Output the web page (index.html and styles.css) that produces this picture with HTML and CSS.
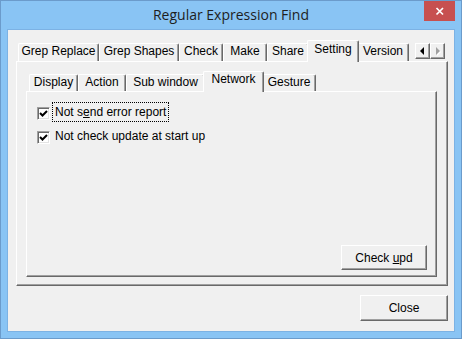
FILE: index.html
```html
<!DOCTYPE html>
<html>
<head>
<meta charset="utf-8">
<title>Regular Expression Find</title>
<link rel="stylesheet" href="styles.css">
</head>
<body>
<div class="window">
  <div class="titlebar">
    <span class="title">Regular Expression Find</span>
    <div class="close-btn">
      <svg width="31" height="20" viewBox="0 0 31 20"><path d="M12.5 7 L19 13.5 M19 7 L12.5 13.5" stroke="#fff" stroke-width="1.7" fill="none"/></svg>
    </div>
  </div>
  <div class="client">
    <div class="tabctl">
      <div class="tabrow outer-row">
        <div class="tab w-gr">Grep Replace</div>
        <div class="tab w-gs">Grep Shapes</div>
        <div class="tab w-check">Check</div>
        <div class="tab w-make">Make</div>
        <div class="tab w-share">Share</div>
        <div class="tab selected w-setting">Setting</div>
        <div class="tab w-version">Version</div>
        <div class="spin">
          <div class="spin-btn"><svg width="13" height="14" viewBox="0 0 13 14"><polygon points="4,7 8,3 8,11" fill="#000"/></svg></div>
          <div class="spin-btn"><svg width="13" height="14" viewBox="0 0 13 14"><polygon points="6,4 10,8 6,12" fill="#fff"/><polygon points="5,3 9,7 5,11" fill="#a0a0a0"/></svg></div>
        </div>
      </div>
      <div class="panel outer-panel">
        <div class="tabctl">
          <div class="tabrow inner-row">
            <div class="tab w-display">Display</div>
            <div class="tab w-action">Action</div>
            <div class="tab w-sub">Sub window</div>
            <div class="tab selected w-network">Network</div>
            <div class="tab w-gesture">Gesture</div>
          </div>
          <div class="panel inner-panel">
            <div class="check-row">
              <span class="box"><svg width="9" height="9" viewBox="0 0 9 9"><path d="M1 4 L3.5 6.5 L8 2" stroke="#000" stroke-width="2" fill="none"/></svg></span>
              <span class="label focused">Not s<u>e</u>nd error report</span>
            </div>
            <div class="check-row second">
              <span class="box"><svg width="9" height="9" viewBox="0 0 9 9"><path d="M1 4 L3.5 6.5 L8 2" stroke="#000" stroke-width="2" fill="none"/></svg></span>
              <span class="label">Not check update at start up</span>
            </div>
            <div class="btn-row">
              <button class="btn btn-check">Check <u>u</u>pd</button>
            </div>
          </div>
        </div>
      </div>
    </div>
    <div class="footer">
      <button class="btn btn-close">Close</button>
    </div>
  </div>
</div>
</body>
</html>
```

FILE: styles.css
```css
* { box-sizing: border-box; }
html, body { margin: 0; padding: 0; }
body {
  width: 462px;
  height: 339px;
  overflow: hidden;
  font-family: "Liberation Sans", Arial, sans-serif;
  font-size: 12px;
  color: #000;
  background: #89c4f4;
}
.window {
  width: 462px;
  height: 339px;
  background: #89c4f4;
  border: 1px solid #6b9bcb;
  padding: 0 6px 6px 6px;
  display: flex;
  flex-direction: column;
}
.titlebar {
  height: 28px;
  flex: none;
  display: grid;
  grid-template-columns: 1fr auto 1fr;
}
.title {
  grid-column: 2;
  font-family: "Open Sans", "Noto Sans", sans-serif;
  font-size: 14px;
  line-height: 19px;
  padding-top: 4px;
  color: #1e1e1e;
  white-space: nowrap;
}
.close-btn {
  grid-column: 3;
  justify-self: end;
  align-self: start;
  width: 31px;
  height: 20px;
  background: #c75050;
  display: flex;
}
.client {
  flex: 1;
  background: #f0f0f0;
  border: 1px solid #7cb2e4;
  padding: 10px 6px 10px 8px;
  display: flex;
  flex-direction: column;
}
.tabctl {
  display: flex;
  flex-direction: column;
}
.tabrow {
  display: flex;
  align-items: flex-end;
  position: relative;
  z-index: 1;
  flex: none;
}
.outer-row { height: 21px; padding-left: 2px; }
.inner-row { height: 20px; padding-left: 3px; }
.tab {
  flex: none;
  border-top: 1px solid #fff;
  border-left: 1px solid #fff;
  border-right: 1px solid #696969;
  box-shadow: inset -1px 0 #a0a0a0;
  border-radius: 2px 2px 0 0;
  line-height: 14px;
  text-align: center;
  white-space: nowrap;
  background: #f0f0f0;
}
.outer-row .tab { height: 18px; }
.inner-row .tab { height: 17px; }
.tab.selected {
  margin: 0 -2px -1px -2px;
  position: relative;
  z-index: 2;
}
.outer-row .tab.selected { height: 22px; padding-top: 1px; }
.inner-row .tab.selected { height: 21px; }
.w-gr { width: 81px; }
.w-gs { width: 80px; }
.w-check { width: 44px; }
.w-make { width: 44px; }
.w-share { width: 42px; }
.w-setting { width: 52px; }
.w-version { width: 52px; }
.w-display { width: 49px; }
.w-action { width: 48px; }
.w-sub { width: 79px; }
.w-network { width: 61px; }
.w-gesture { width: 54px; }
.spin {
  margin-left: auto;
  margin-right: 3px;
  align-self: flex-start;
  margin-top: 3px;
  display: flex;
}
.spin-btn {
  width: 15px;
  height: 16px;
  background: #f0f0f0;
  border: 1px solid;
  border-color: #fff #696969 #696969 #fff;
  box-shadow: inset -1px -1px #a0a0a0;
}
.spin-btn svg { display: block; }
.panel {
  border: 1px solid;
  border-color: #fff #696969 #696969 #fff;
  box-shadow: inset -1px -1px #a0a0a0;
  background: #f0f0f0;
}
.outer-panel {
  height: 225px;
  padding: 9px 10px 8px 9px;
}
.inner-panel {
  height: 186px;
  padding: 10px 9px 6px 10px;
  display: flex;
  flex-direction: column;
}
.check-row {
  display: flex;
  align-items: flex-start;
  height: 20px;
}
.check-row.second { margin-top: 4px; }
.box {
  width: 13px;
  height: 13px;
  margin-top: 5px;
  margin-right: 2px;
  background: #fff;
  border: 1px solid;
  border-color: #a0a0a0 #fff #fff #a0a0a0;
  box-shadow: inset 1px 1px #696969, inset -1px -1px #e3e3e3;
  padding: 1px;
  display: flex;
}
.box svg { display: block; }
.label {
  height: 20px;
  line-height: 18px;
  padding: 0 2px;
  border: 1px dotted transparent;
  white-space: nowrap;
}
.label.focused { border-color: #000; }
.btn-row {
  margin-top: auto;
  display: flex;
  justify-content: flex-end;
}
.btn {
  font-family: "Liberation Sans", Arial, sans-serif;
  font-size: 12px;
  color: #000;
  background: #f0f0f0;
  border: 1px solid;
  border-color: #fff #696969 #696969 #fff;
  box-shadow: inset -1px -1px #a0a0a0;
  padding: 0;
  margin: 0;
  border-radius: 0;
}
.btn-check { width: 86px; height: 25px; }
.footer {
  margin-top: 9px;
  display: flex;
  justify-content: flex-end;
}
.btn-close { width: 88px; height: 26px; }
```
